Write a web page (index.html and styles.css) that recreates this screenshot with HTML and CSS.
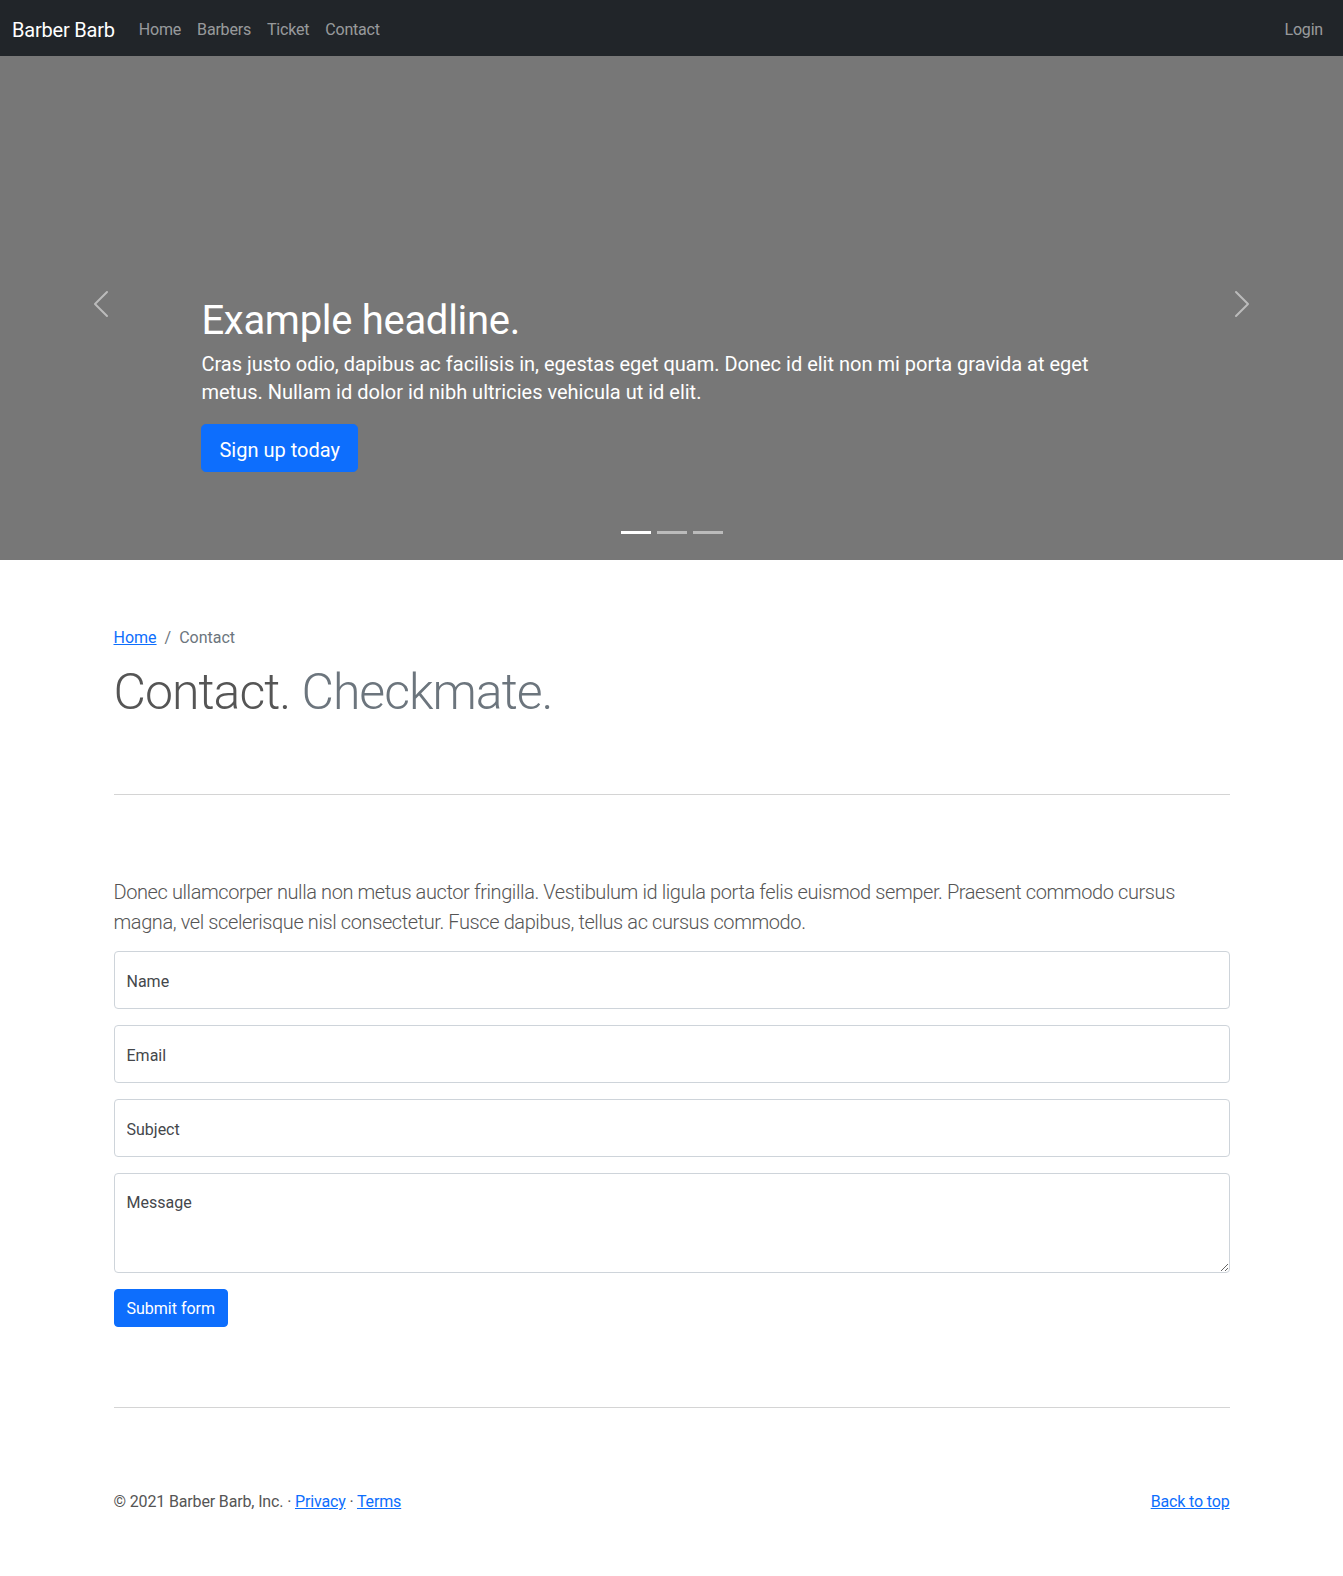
FILE: index.html
```html
<!DOCTYPE html>
<html lang="en">
<head>
<meta charset="utf-8">
<title>Barber Barb · Contact</title>
<link rel="stylesheet" href="styles.css">
</head>
<body>
<header>
  <nav class="navbar">
    <div class="nav-left">
      <a class="brand" href="#">Barber Barb</a>
      <ul class="nav-links">
        <li><a href="#">Home</a></li>
        <li><a href="#">Barbers</a></li>
        <li><a href="#">Ticket</a></li>
        <li><a href="#">Contact</a></li>
      </ul>
    </div>
    <a class="nav-login" href="#">Login</a>
  </nav>
</header>

<main>
  <div class="carousel">
    <div class="carousel-item">
      <div class="carousel-caption">
        <h1>Example headline.</h1>
        <p class="caption-text">Cras justo odio, dapibus ac facilisis in, egestas eget quam. Donec id elit non mi porta gravida at eget metus. Nullam id dolor id nibh ultricies vehicula ut id elit.</p>
        <p class="caption-btn"><a class="btn-lg" href="#">Sign up today</a></p>
      </div>
    </div>
    <div class="carousel-indicators">
      <span class="indicator active"></span>
      <span class="indicator"></span>
      <span class="indicator"></span>
    </div>
    <a class="control control-prev" href="#" aria-label="Previous">
      <svg viewBox="0 0 16 16" width="32" height="32" fill="#fff"><path d="M11.354 1.646a.5.5 0 0 1 0 .708L5.707 8l5.647 5.646a.5.5 0 0 1-.708.708l-6-6a.5.5 0 0 1 0-.708l6-6a.5.5 0 0 1 .708 0z"/></svg>
    </a>
    <a class="control control-next" href="#" aria-label="Next">
      <svg viewBox="0 0 16 16" width="32" height="32" fill="#fff"><path d="M4.646 1.646a.5.5 0 0 1 .708 0l6 6a.5.5 0 0 1 0 .708l-6 6a.5.5 0 0 1-.708-.708L10.293 8 4.646 2.354a.5.5 0 0 1 0-.708z"/></svg>
    </a>
  </div>

  <div class="container">
    <ol class="breadcrumb">
      <li><a href="#">Home</a></li>
      <li class="divider">/</li>
      <li class="active">Contact</li>
    </ol>
    <h2 class="featurette-heading">Contact. <span class="muted">Checkmate.</span></h2>

    <hr class="divider-line divider-top">

    <p class="lead">Donec ullamcorper nulla non metus auctor fringilla. Vestibulum id ligula porta felis euismod semper. Praesent commodo cursus magna, vel scelerisque nisl consectetur. Fusce dapibus, tellus ac cursus commodo.</p>

    <form class="contact-form">
      <input class="form-control" type="text" placeholder="Name">
      <input class="form-control" type="email" placeholder="Email">
      <input class="form-control" type="text" placeholder="Subject">
      <textarea class="form-control form-textarea" placeholder="Message"></textarea>
      <div><button class="btn-primary" type="button">Submit form</button></div>
    </form>

    <hr class="divider-line divider-bottom">
  </div>
</main>

<footer class="container footer">
  <p>&copy; 2021 Barber Barb, Inc. &middot; <a href="#">Privacy</a> &middot; <a href="#">Terms</a></p>
  <p><a href="#">Back to top</a></p>
</footer>
</body>
</html>
```

FILE: styles.css
```css
* { box-sizing: border-box; }

body {
  margin: 0;
  padding-top: 48px;
  padding-bottom: 48px;
  font-family: Roboto, "Noto Sans", "Liberation Sans", sans-serif;
  font-size: 16px;
  line-height: 1.5;
  color: #555;
  background: #fff;
}

a { color: #0d6efd; }

/* Navbar */
.navbar {
  position: fixed;
  top: 0;
  left: 0;
  right: 0;
  z-index: 30;
  height: 56px;
  background: #212529;
  display: flex;
  align-items: center;
  justify-content: space-between;
  padding: 3px 12px 0;
}
.nav-left { display: flex; align-items: center; }
.brand {
  color: #fff;
  font-size: 20px;
  text-decoration: none;
  margin-right: 16px;
  line-height: 30px;
  letter-spacing: -.2px;
}
.nav-links {
  list-style: none;
  margin: 0;
  padding: 0;
  display: flex;
}
.nav-links a, .nav-login {
  display: block;
  padding: 8px;
  color: rgba(255, 255, 255, .55);
  text-decoration: none;
  font-size: 16px;
  letter-spacing: -.2px;
}

/* Carousel */
.carousel {
  position: relative;
  height: 512px;
  margin-bottom: 64px;
  background: #777;
  overflow: hidden;
}
.carousel-item {
  position: relative;
  height: 100%;
}
.carousel-caption {
  position: absolute;
  left: 15%;
  right: 15%;
  bottom: 48px;
  padding: 20px 0;
  color: #fff;
  text-align: left;
  z-index: 10;
}
.carousel-caption h1 {
  margin: 0 0 3px;
  font-size: 40px;
  font-weight: 400;
  line-height: 1.2;
  letter-spacing: -.3px;
}
.caption-text {
  margin: 0 0 18px;
  padding-top: 2px;
  font-size: 20px;
  line-height: 1.4;
}
.caption-btn { margin: 0 0 20px; }
.btn-lg {
  display: inline-block;
  background: #0d6efd;
  color: #fff;
  text-decoration: none;
  font-size: 20px;
  line-height: 1.5;
  padding: 10px 17px 6px;
  border: 1px solid #0d6efd;
  border-radius: 4.8px;
}
.carousel-indicators {
  position: absolute;
  left: 0;
  right: 0;
  bottom: 0;
  margin-bottom: 16px;
  display: flex;
  justify-content: center;
  z-index: 2;
}
.indicator {
  box-sizing: content-box;
  width: 30px;
  height: 3px;
  margin: 0 3px;
  background: #fff;
  background-clip: padding-box;
  border-top: 10px solid transparent;
  border-bottom: 10px solid transparent;
  opacity: .5;
}
.indicator.active { opacity: 1; }
.control {
  position: absolute;
  top: 0;
  bottom: 0;
  width: 15%;
  display: flex;
  align-items: center;
  justify-content: center;
  opacity: .5;
  z-index: 1;
}
.control-prev { left: 0; }
.control-next { right: 0; }

/* Main content */
.container {
  width: 1140px;
  margin: 0 auto;
  padding: 0 12px;
}
.breadcrumb {
  list-style: none;
  margin: 0;
  padding: 2px 0 0;
  display: flex;
}
.breadcrumb .divider {
  color: #6c757d;
  padding: 0 8px;
}
.breadcrumb .active { color: #6c757d; }

.featurette-heading {
  margin: 17px 0 0;
  font-size: 50px;
  font-weight: 300;
  line-height: 1;
  letter-spacing: -1px;
  color: #555;
}
.muted { color: #6c757d; }

.divider-line {
  margin: 80px 0;
  border: 0;
  height: 1px;
  background: #d4d4d4;
}
.divider-top { margin-top: 77px; margin-bottom: 82px; }
.divider-bottom { margin-bottom: 82px; }

.lead {
  margin: 0 0 14px;
  font-size: 20px;
  font-weight: 300;
  line-height: 1.5;
  letter-spacing: -.4px;
  color: #555;
}

.contact-form {
  display: flex;
  flex-direction: column;
  gap: 16px;
}
.form-control {
  display: block;
  width: 100%;
  height: 58px;
  padding: 17px 12px 15px;
  font-family: inherit;
  font-size: 16px;
  line-height: 1.5;
  color: #212529;
  background: #fff;
  border: 1px solid #ced4da;
  border-radius: 4px;
  margin: 0;
}
.form-control::placeholder { color: #44474b; opacity: 1; }
.form-textarea {
  height: 100px;
  resize: vertical;
}
.btn-primary {
  font-family: inherit;
  font-size: 16px;
  line-height: 1.5;
  color: #fff;
  background: #0d6efd;
  border: 1px solid #0d6efd;
  border-radius: 4px;
  padding: 7px 12px 5px;
  cursor: pointer;
}

/* Footer */
.footer {
  display: flex;
  justify-content: space-between;
}
.footer p { margin: 0 0 14px; letter-spacing: -.15px; }
```
